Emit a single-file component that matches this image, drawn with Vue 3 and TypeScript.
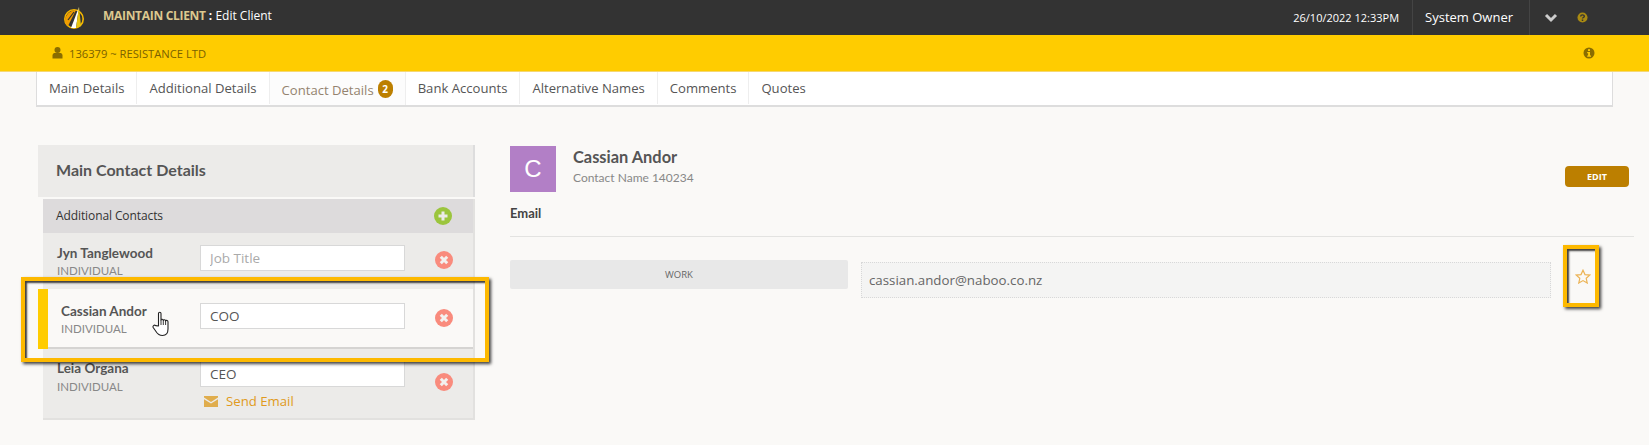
<template>
  <div class="page">
    <header class="topbar">
      <svg class="logo" width="22" height="24" viewBox="0 0 22 24">
        <circle cx="11" cy="13" r="9.2" fill="none" stroke="#f5b800" stroke-width="1.6" />
        <path d="M2 15 C2 9 7 4 13 4 L5 20 C3 19 2 17 2 15 Z" fill="#f09c00" />
        <path d="M5 14 L11 6" stroke="#333" stroke-width="1.2" />
        <path d="M16 1 L13 22 L8 22 Z" fill="#fff" />
        <path d="M16 1 L18 20 L13 22 Z" fill="#e8c410" />
      </svg>
      <div class="title"><strong>MAINTAIN CLIENT</strong> <b>:</b> Edit Client</div>
      <div class="date">26/10/2022 12:33PM</div>
      <div class="user">System Owner</div>
      <div class="chevron">
        <svg width="14" height="10" viewBox="0 0 14 10"><path d="M2 2 L7 7 L12 2" fill="none" stroke="#ccc" stroke-width="3" /></svg>
      </div>
      <svg class="help" width="11" height="11" viewBox="0 0 12 12">
        <circle cx="6" cy="6" r="5.5" fill="#a98a12" />
        <path d="M4 4.8 C4 2.6 8 2.6 8 4.7 C8 6 6 6 6 7.2" fill="none" stroke="#333" stroke-width="1.5" />
        <rect x="5.2" y="8.2" width="1.6" height="1.6" fill="#333" />
      </svg>
    </header>

    <div class="subbar">
      <svg width="11" height="12" viewBox="0 0 11 12">
        <circle cx="5.5" cy="3" r="3" fill="#8a6d00" />
        <path d="M0.5 11.5 V8.5 C0.5 6.5 2 6 3 6 H8 C9 6 10.5 6.5 10.5 8.5 V11.5 Z" fill="#8a6d00" />
      </svg>
      <span class="client">136379 ~ RESISTANCE LTD</span>
      <svg class="info" width="12" height="12" viewBox="0 0 12 12">
        <circle cx="6" cy="6" r="5.5" fill="#8a6d00" />
        <rect x="5" y="2.2" width="2" height="1.8" fill="#fc0" />
        <path d="M4.2 5 H7 V8.6 H8 V9.8 H4.2 V8.6 H5.1 V6.2 H4.2 Z" fill="#fc0" />
      </svg>
    </div>

    <nav class="tabs">
      <a v-for="tab in tabs" :key="tab.label" class="tab" :class="{ active: tab.count }">
        {{ tab.label }}<span v-if="tab.count" class="count">{{ tab.count }}</span>
      </a>
    </nav>

    <main class="content">
      <section class="left">
        <h2 class="panel-title">Main Contact Details</h2>
        <div class="contacts">
          <div class="contacts-head">
            <span>Additional Contacts</span>
            <svg width="18" height="18" viewBox="0 0 18 18">
              <circle cx="9" cy="9" r="9" fill="#9bc53d" />
              <path d="M9 4.5 V13.5 M4.5 9 H13.5" stroke="#ecebe9" stroke-width="3" />
            </svg>
          </div>
          <div
            v-for="c in contacts"
            :key="c.name"
            class="contact"
            :class="{ selected: c.selected, last: c.email }"
          >
            <div class="who">
              <div class="who-name">{{ c.name }}</div>
              <div class="who-type">INDIVIDUAL</div>
            </div>
            <div class="job">
              <input class="job-input" :value="c.job" placeholder="Job Title" />
              <a v-if="c.email" class="send">
                <svg width="14" height="11" viewBox="0 0 14 11">
                  <path d="M0 0 H14 V1.5 L7 6 L0 1.5 Z" fill="#e0ad4d" />
                  <path d="M0 3.2 L7 7.6 L14 3.2 V11 H0 Z" fill="#e0ad4d" />
                </svg>
                Send Email
              </a>
            </div>
            <svg class="remove" width="18" height="18" viewBox="0 0 18 18">
              <circle cx="9" cy="9" r="9" fill="#f98b7d" />
              <path d="M5.8 5.8 L12.2 12.2 M12.2 5.8 L5.8 12.2" stroke="#f3f1ef" stroke-width="3" />
            </svg>
          </div>
        </div>
      </section>

      <section class="right">
        <div class="person">
          <div class="avatar">C</div>
          <div class="person-text">
            <div class="person-name">Cassian Andor</div>
            <div class="person-sub">Contact Name 140234</div>
          </div>
          <button class="edit">EDIT</button>
        </div>
        <div class="email-label">Email</div>
        <div class="email-row">
          <div class="work">WORK</div>
          <div class="email-value">cassian.andor@naboo.co.nz</div>
          <svg class="star" width="16" height="15" viewBox="0 0 16 15">
            <path d="M8 1.2 L10 5.6 L14.8 6.1 L11.2 9.3 L12.2 14 L8 11.6 L3.8 14 L4.8 9.3 L1.2 6.1 L6 5.6 Z" fill="none" stroke="#ecb354" stroke-width="1.2" />
          </svg>
        </div>
      </section>
    </main>

    <div class="mark mark-row"></div>
    <div class="mark mark-star"></div>
    <svg class="cursor" width="20" height="26" viewBox="0 0 20 26">
      <path d="M6.5 15 V2.5 C6.5 0.8 9 0.8 9 2.5 V9 C9 8 11.3 8 11.3 9.5 C11.3 8.5 13.6 8.5 13.6 10 C13.6 9 16 9 16 10.8 V18 C16 22 14 24.5 10.5 24.5 C7.5 24.5 5.5 23 4 20.5 L1.2 16.5 C0.4 15 2.2 13.5 3.6 14.6 Z" fill="#fff" stroke="#222" stroke-width="1.1" stroke-linejoin="round" />
      <path d="M9 9 V14 M11.3 9.5 V14 M13.6 10 V14" stroke="#222" stroke-width="0.9" fill="none" />
    </svg>
  </div>
</template>

<script setup lang="ts">
interface Tab {
  label: string
  count?: number
}

interface Contact {
  name: string
  job: string
  selected?: boolean
  email?: boolean
}

const tabs: Tab[] = [
  { label: 'Main Details' },
  { label: 'Additional Details' },
  { label: 'Contact Details', count: 2 },
  { label: 'Bank Accounts' },
  { label: 'Alternative Names' },
  { label: 'Comments' },
  { label: 'Quotes' }
]

const contacts: Contact[] = [
  { name: 'Jyn Tanglewood', job: '' },
  { name: 'Cassian Andor', job: 'COO', selected: true },
  { name: 'Leia Organa', job: 'CEO', email: true }
]
</script>

<style>
body {
  background: #faf9f7;
  overflow: hidden;
}
</style>

<style scoped>
.page {
  position: relative;
  width: 1649px;
  height: 445px;
  overflow: hidden;
  background: #faf9f7;
  font-family: "Open Sans", sans-serif;
  color: #555;
}

.topbar {
  display: flex;
  align-items: center;
  height: 35px;
  background: #333;
  color: #fff;
  padding-left: 63px;
  box-sizing: border-box;
}

.logo {
  flex: none;
}

.title {
  margin-left: 18px;
  font-size: 12px;
  flex: 1;
  margin-top: -5px;
}

.title strong {
  color: #dcc88f;
  font-weight: 700;
  letter-spacing: -0.3px;
}

.date {
  font-size: 11px;
  margin-right: 13px;
}

.user {
  height: 35px;
  line-height: 35px;
  padding: 0 16px 0 12px;
  font-size: 13px;
  border-left: 1px solid #444;
  border-right: 1px solid #444;
}

.chevron {
  display: flex;
  margin-left: 14px;
}

.help {
  margin: 0 61px 1px 19px;
}

.subbar {
  display: flex;
  align-items: center;
  height: 37px;
  background: #fc0;
  border-bottom: 1px solid #f5d873;
  box-sizing: border-box;
  padding: 0 54px 0 52px;
  color: #7a6100;
}

.client {
  margin-left: 6px;
  font-size: 11.2px;
  flex: 1;
}

.tabs {
  display: flex;
  height: 35px;
  margin: 0 36px 0 36px;
  width: 1577px;
  box-sizing: border-box;
  background: #fff;
  border-left: 1px solid #ddd;
  border-right: 1px solid #ddd;
  border-bottom: 2px solid #ddd;
}

.tab {
  display: flex;
  align-items: center;
  padding: 0 12px;
  font-size: 13.1px;
  color: #555;
  border-right: 1px solid #eee;
  height: 32px;
}

.tab:last-child {
  border-right: none;
}

.tab.active {
  color: #94836f;
  background: #fcfcfc;
  height: 33px;
  padding-top: 3px;
  box-sizing: border-box;
}

.count {
  display: flex;
  align-items: center;
  justify-content: center;
  width: 15px;
  height: 18px;
  margin: -2px 0 0 4px;
  border-radius: 8px;
  background: #bc7f00;
  color: #fff;
  font-size: 10px;
  font-weight: 700;
}

.content {
  display: flex;
  padding: 38px 15px 0 38px;
}

.left {
  width: 437px;
  flex: none;
}

.panel-title {
  margin: 0;
  height: 52px;
  line-height: 50px;
  padding-left: 18px;
  font-family: Lato, sans-serif;
  font-size: 16px;
  font-weight: 700;
  color: #555;
  background: #ecebe9;
  border-right: 2px solid #ddd;
  box-sizing: border-box;
}

.contacts {
  margin: 2px 0 0 5px;
  background: #ecebe9;
  border-right: 2px solid #e2e1df;
  border-bottom: 2px solid #e2e1df;
}

.contacts-head {
  display: flex;
  align-items: center;
  justify-content: space-between;
  height: 34px;
  padding: 0 21px 0 13px;
  background: #dddbdc;
  font-size: 12px;
  letter-spacing: -0.1px;
  color: #333;
}

.contacts-head span {
  margin-top: -2px;
}

.contact {
  display: flex;
  align-items: flex-start;
  height: 56px;
  padding: 12px 21px 0 14px;
  box-sizing: border-box;
}

.contact.selected {
  position: relative;
  margin-left: -5px;
  height: 60px;
  padding-top: 14px;
  padding-left: 13px;
  background: #faf9f7;
  border-left: 10px solid #fc0;
  box-shadow: inset 0 -2px 0 #d5d4d2;
}

.contact.last {
  height: 69px;
}

.who {
  width: 143px;
  flex: none;
}

.selected .who {
  width: 139px;
}

.last .who {
  margin-top: -1px;
}

.who-name {
  font-family: Lato, sans-serif;
  font-size: 13.5px;
  font-weight: 700;
  line-height: 17px;
  color: #555;
}

.who-type {
  font-family: Lato, sans-serif;
  font-size: 11.5px;
  line-height: 17px;
  color: #888;
}

.last .who-type {
  margin-top: 1px;
}

.job {
  width: 205px;
  flex: none;
}

.job-input {
  display: block;
  width: 205px;
  height: 26px;
  padding: 0 9px;
  box-sizing: border-box;
  border: 1px solid #d8d8d8;
  background: #fff;
  font-family: "Open Sans", sans-serif;
  font-size: 13.5px;
  color: #555;
  outline: none;
}

.job-input::placeholder {
  color: #aaa;
}

.send {
  display: flex;
  align-items: center;
  gap: 8px;
  margin: 5px 0 0 4px;
  font-size: 13.2px;
  color: #e09a20;
}

.remove {
  margin: 6px 0 0 30px;
  flex: none;
}

.last .remove {
  margin-top: 12px;
}

.right {
  flex: 1;
  margin-left: 35px;
}

.person {
  display: flex;
  align-items: flex-start;
  height: 46px;
  padding-top: 1px;
}

.avatar {
  display: flex;
  align-items: center;
  justify-content: center;
  width: 46px;
  height: 46px;
  background: #b27fc6;
  color: #fff;
  font-family: "Liberation Sans", sans-serif;
  font-size: 24px;
  flex: none;
}

.person-text {
  flex: 1;
  margin-left: 17px;
  padding-top: 1px;
}

.person-name {
  font-family: Lato, sans-serif;
  font-size: 16.4px;
  font-weight: 700;
  line-height: 20px;
  color: #555;
}

.person-sub {
  font-family: Lato, sans-serif;
  font-size: 12px;
  margin-top: 2px;
  line-height: 17px;
  color: #888;
}

.edit {
  width: 64px;
  height: 21px;
  margin: 20px 5px 0 0;
  padding: 0;
  border: none;
  border-radius: 4px;
  background: #bc7f00;
  color: #fff;
  font-family: "Open Sans", sans-serif;
  font-size: 9px;
  font-weight: 700;
}

.email-label {
  margin-top: 13px;
  padding-bottom: 14px;
  border-bottom: 1px solid #e3e3e1;
  font-family: Lato, sans-serif;
  font-size: 13px;
  font-weight: 700;
  line-height: 17px;
  color: #444;
}

.email-row {
  display: flex;
  align-items: flex-start;
  margin-top: 23px;
}

.work {
  width: 338px;
  height: 29px;
  line-height: 30px;
  text-align: center;
  border-radius: 2px;
  background: #e8e8e8;
  font-size: 9.5px;
  color: #666;
  flex: none;
}

.email-value {
  width: 690px;
  height: 36px;
  line-height: 34px;
  margin: 2px 0 0 13px;
  padding-left: 7px;
  box-sizing: border-box;
  border: 1px dotted #d8d8d8;
  background: #f4f4f3;
  font-size: 13.3px;
  color: #666;
  flex: none;
}

.star {
  margin: 9px 0 0 24px;
}

.mark {
  position: absolute;
  box-sizing: border-box;
  border: 4px solid #fdb900;
  box-shadow: 2px 2px 3px rgba(0, 0, 0, 0.75), inset 2px 2px 2px rgba(0, 0, 0, 0.75);
}

.mark-row {
  left: 21px;
  top: 277px;
  width: 468px;
  height: 85px;
}

.mark-star {
  left: 1563px;
  top: 245px;
  width: 36px;
  height: 62px;
}

.cursor {
  position: absolute;
  left: 152px;
  top: 311px;
}
</style>
